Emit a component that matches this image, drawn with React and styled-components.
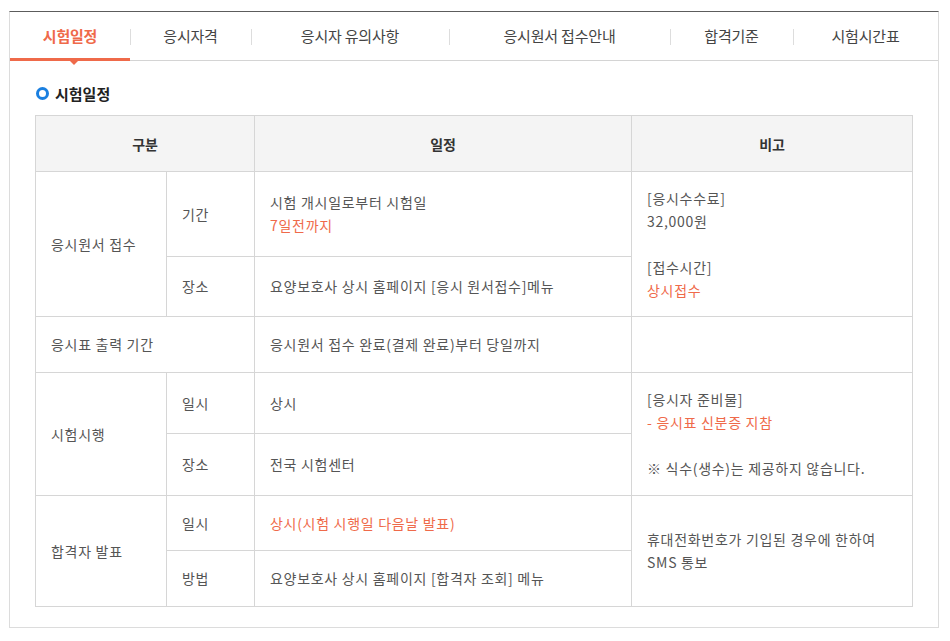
import styled, { createGlobalStyle } from "styled-components";

const GlobalStyle = createGlobalStyle`
    body {
        margin: 0;
        background: #fff;
        font-family: "Noto Sans CJK KR", "Noto Sans", sans-serif;
    }
`;

const tabs = [
    { label: "시험일정", width: 120, active: true },
    { label: "응시자격", width: 121 },
    { label: "응시자 유의사항", width: 198 },
    { label: "응시원서 접수안내", width: 221 },
    { label: "합격기준", width: 123 },
    { label: "시험시간표", width: 145 },
];

const App = () => {
    return (
        <>
            <GlobalStyle />
            <StyledPage>
                <StyledBox>
                    <StyledTabs>
                        {tabs.map((tab, i) => (
                            <Tab key={tab.label} $width={tab.width} $active={tab.active} $first={i === 0}>
                                {tab.label}
                            </Tab>
                        ))}
                    </StyledTabs>
                    <StyledContent>
                        <StyledTitle>
                            <Ring />
                            시험일정
                        </StyledTitle>
                        <StyledTable>
                            <colgroup>
                                <col style={{ width: 131 }} />
                                <col style={{ width: 88 }} />
                                <col style={{ width: 377 }} />
                                <col />
                            </colgroup>
                            <thead>
                                <Row $h={56}>
                                    <Th colSpan={2}>구분</Th>
                                    <Th>일정</Th>
                                    <Th>비고</Th>
                                </Row>
                            </thead>
                            <tbody>
                                <Row $h={85}>
                                    <Td rowSpan={2}>응시원서 접수</Td>
                                    <Td>기간</Td>
                                    <Td>
                                        시험 개시일로부터 시험일
                                        <br />
                                        <Accent>7일전까지</Accent>
                                    </Td>
                                    <Td rowSpan={2}>
                                        [응시수수료]
                                        <br />
                                        32,000원
                                        <br />
                                        <br />
                                        [접수시간]
                                        <br />
                                        <Accent>상시접수</Accent>
                                    </Td>
                                </Row>
                                <Row $h={60}>
                                    <Td>장소</Td>
                                    <Td>요양보호사 상시 홈페이지 [응시 원서접수]메뉴</Td>
                                </Row>
                                <Row $h={56}>
                                    <Td colSpan={2}>응시표 출력 기간</Td>
                                    <Td>응시원서 접수 완료(결제 완료)부터 당일까지</Td>
                                    <Td></Td>
                                </Row>
                                <Row $h={61}>
                                    <Td rowSpan={2}>시험시행</Td>
                                    <Td>일시</Td>
                                    <Td>상시</Td>
                                    <Td rowSpan={2}>
                                        [응시자 준비물]
                                        <br />
                                        <Accent>- 응시표 신분증 지참</Accent>
                                        <br />
                                        <br />
                                        ※ 식수(생수)는 제공하지 않습니다.
                                    </Td>
                                </Row>
                                <Row $h={62}>
                                    <Td>장소</Td>
                                    <Td>전국 시험센터</Td>
                                </Row>
                                <Row $h={55}>
                                    <Td rowSpan={2}>합격자 발표</Td>
                                    <Td>일시</Td>
                                    <Td>
                                        <Accent>상시(시험 시행일 다음날 발표)</Accent>
                                    </Td>
                                    <Td rowSpan={2}>
                                        휴대전화번호가 기입된 경우에 한하여
                                        <br />
                                        SMS 통보
                                    </Td>
                                </Row>
                                <Row $h={56}>
                                    <Td>방법</Td>
                                    <Td>요양보호사 상시 홈페이지 [합격자 조회] 메뉴</Td>
                                </Row>
                            </tbody>
                        </StyledTable>
                    </StyledContent>
                </StyledBox>
            </StyledPage>
        </>
    );
};

const StyledPage = styled.div`
    padding: 11px 11px 13px 9px;
`;

const StyledBox = styled.div`
    border: 1px solid #dcdcdc;
    border-top: 1px solid #5c5c5c;
    min-height: 615px;
    box-sizing: border-box;
`;

const StyledTabs = styled.div`
    display: flex;
    height: 48px;
    border-bottom: 1px solid #d4d4d4;
`;

const Tab = styled.div`
    position: relative;
    width: ${(p) => p.$width}px;
    display: flex;
    align-items: center;
    justify-content: center;
    font-size: 15px;
    color: ${(p) => (p.$active ? "#ef6a4a" : "#444")};
    font-weight: ${(p) => (p.$active ? 700 : 400)};
    letter-spacing: -0.2px;
    padding-bottom: 1px;
    &::before {
        content: "";
        display: ${(p) => (p.$first ? "none" : "block")};
        position: absolute;
        left: 0;
        top: 17px;
        height: 16px;
        width: 1px;
        background: #dddddd;
    }
    &::after {
        content: "";
        display: ${(p) => (p.$active ? "block" : "none")};
        position: absolute;
        left: 0;
        right: 0;
        bottom: -1px;
        height: 3px;
        background: #ef6a4a;
    }
`;

const StyledContent = styled.div`
    position: relative;
    padding: 20px 25px 20px 25px;
    &::before {
        content: "";
        position: absolute;
        left: 60px;
        top: 0;
        border-left: 4px solid transparent;
        border-right: 4px solid transparent;
        border-top: 4px solid #ef6a4a;
    }
`;

const StyledTitle = styled.h3`
    display: flex;
    align-items: center;
    gap: 6px;
    margin: 0 0 10px;
    font-size: 15px;
    font-weight: 700;
    color: #222;
    height: 24px;
`;

const Ring = styled.span`
    width: 7px;
    height: 7px;
    border: 3px solid #1a7fe0;
    border-radius: 50%;
    margin-left: 1px;
`;

const StyledTable = styled.table`
    width: 878px;
    border-collapse: collapse;
    table-layout: fixed;
    font-size: 14px;
    color: #555;
    border: 1px solid #d6d6d6;
`;

const Row = styled.tr`
    height: ${(p) => p.$h}px;
`;

const Th = styled.th`
    background: #f4f4f4;
    border: 1px solid #d6d6d6;
    color: #333;
    font-weight: 700;
    font-size: 14px;
    text-align: center;
    padding: 0;
`;

const Td = styled.td`
    border: 1px solid #d6d6d6;
    padding: 12px 15px;
    line-height: 23px;
    vertical-align: middle;
    text-align: left;
    letter-spacing: 0.7px;
`;

const Accent = styled.span`
    color: #ef6a4a;
`;

export default App;
